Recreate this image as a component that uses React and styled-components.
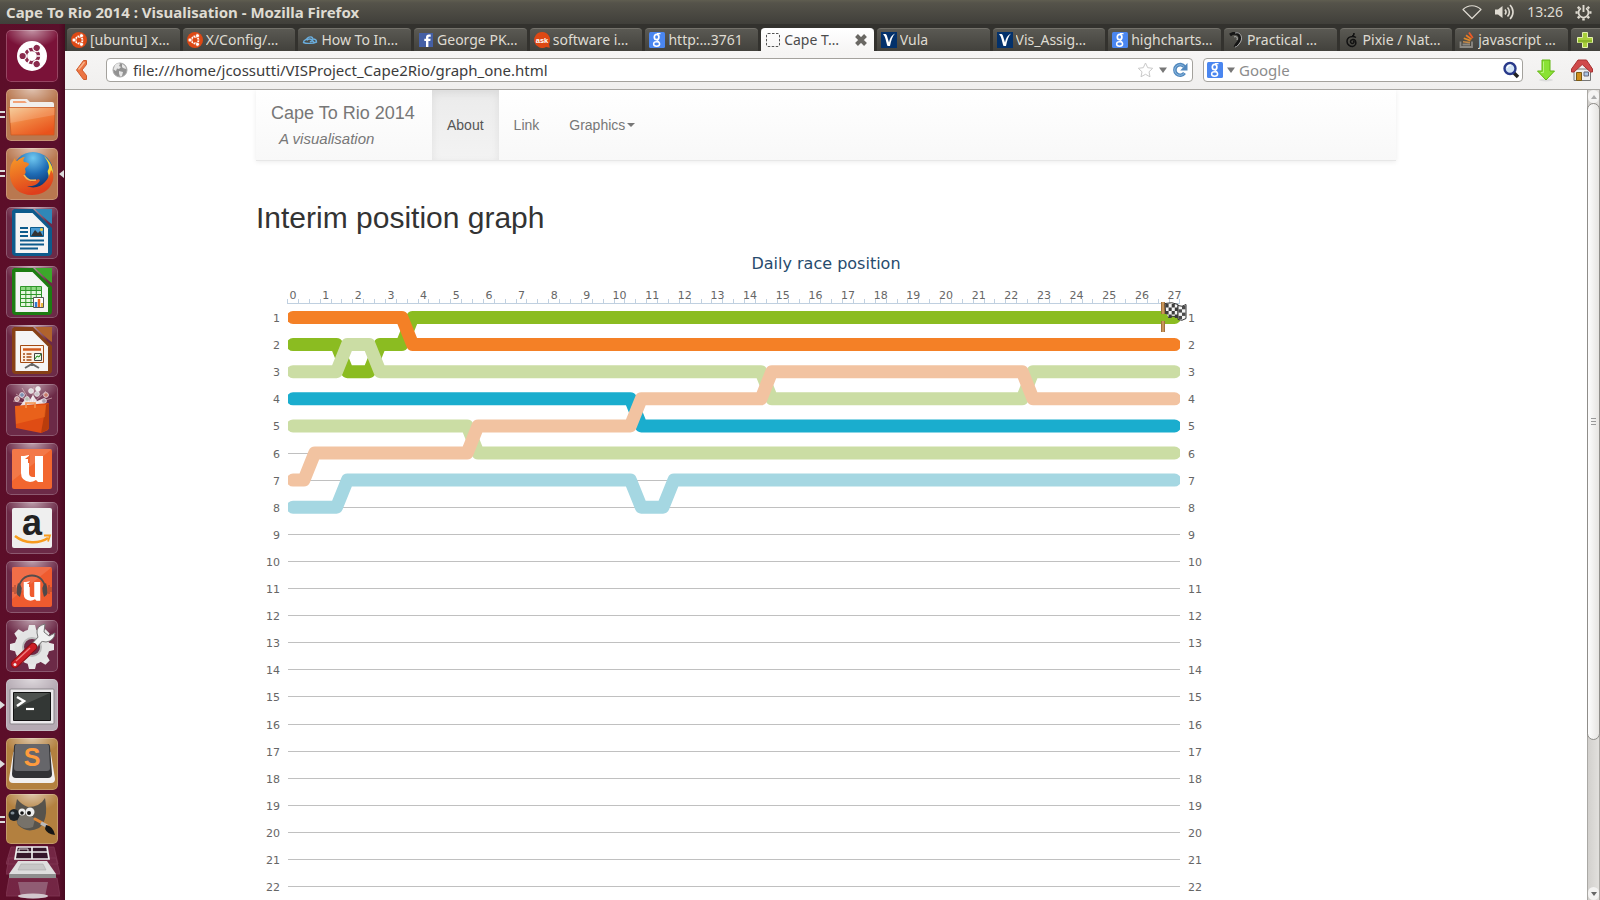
import React from "react";
import styled, { createGlobalStyle, css } from "styled-components";

const Global = createGlobalStyle`
  * { box-sizing: border-box; }
  body { margin: 0; background: #fff; overflow: hidden; }
  button, input { font: inherit; color: inherit; margin: 0; padding: 0; border: 0; background: none; }
  svg { display: block; flex: none; }
`;

const uiFont = `"Noto Sans", "Open Sans", sans-serif`;
const helvetica = `"Liberation Sans", Helvetica, Arial, sans-serif`;

const Desktop = styled.div`
  height: 100vh;
  display: flex;
  flex-direction: column;
  font-family: ${uiFont};
`;

/* ---------- top panel ---------- */
const Panel = styled.header`
  flex: none;
  height: 24px;
  display: flex;
  align-items: center;
  justify-content: space-between;
  padding: 0 8px 0 6px;
  background: linear-gradient(#5f5d50 0, #55534a 3px, #403f3a);
  color: #dfdbd2;
  font-size: 14px;
  line-height: 24px;
`;
const WindowTitle = styled.strong`
  font-weight: 700;
  font-size: 15px;
`;
const Indicators = styled.div`
  display: flex;
  align-items: center;
  gap: 12px;
`;
const ToolbarButtons = styled.div`
  display: flex;
  align-items: center;
  gap: 14px;
`;

const Workspace = styled.div`
  flex: 1;
  min-height: 0;
  display: flex;
`;

/* ---------- launcher ---------- */
const LauncherBar = styled.nav`
  flex: none;
  width: 65px;
  padding: 6px 7px 0 6px;
  display: flex;
  flex-direction: column;
  gap: 7px;
  overflow: hidden;
  background: linear-gradient(90deg, #5c0e29, #5a0f2b 90%, #480a20);
`;
const tones = {
  dash: "#7a1238",
  warm: "#b97850",
  plain: "#6c2a47",
  grey: "#b5aab3",
  gold: "#b3803f",
};
const Tile = styled.button`
  position: relative;
  flex: none;
  width: 52px;
  height: ${(p) => (p.$folding ? "50px" : "52px")};
  margin-top: ${(p) => (p.$folding ? "-3px" : "0")};
  display: grid;
  place-items: center;
  border-radius: 5px;
  background: radial-gradient(ellipse 28px 18px at 50% 0, rgba(255, 255, 255, 0.55), transparent), ${(p) => tones[p.$tone]};
  box-shadow: inset 0 0 0 1px rgba(255, 255, 255, 0.22);
`;
const Mark = styled.span`
  position: absolute;
  top: 22px;
  left: -6px;
  width: 5px;
  height: 7px;
  ${(p) =>
    p.$kind === "two"
      ? css`
          border-top: 2px solid #ddd;
          border-bottom: 2px solid #ddd;
        `
      : css`
          border: 4px solid transparent;
          border-left: 5px solid #ddd;
          border-right: 0;
          height: 8px;
        `}
`;
const Focus = styled.span`
  position: absolute;
  top: 22px;
  right: -6px;
  border: 4px solid transparent;
  border-right: 5px solid #ddd;
  border-left: 0;
`;
const Folded = styled.div`
  flex: none;
  width: 52px;
  margin-top: -5px;
`;

/* ---------- browser ---------- */
const Browser = styled.main`
  flex: 1;
  min-width: 0;
  display: flex;
  flex-direction: column;
`;
const TabStrip = styled.div`
  flex: none;
  height: 27px;
  display: flex;
  align-items: flex-end;
  gap: 3px;
  padding: 0 0 0 2px;
  background: #33322e;
`;
const Tab = styled.button`
  flex: 1 1 0;
  min-width: 0;
  height: 23px;
  display: flex;
  align-items: center;
  gap: 3px;
  padding: 0 5px 0 4px;
  border-radius: 4px 4px 0 0;
  border-top: 1px solid ${(p) => (p.$active ? "#fff" : "#74726b")};
  background: ${(p) => (p.$active ? "linear-gradient(#fff, #f6f5f4)" : "linear-gradient(#5a5953, #42413c)")};
  color: ${(p) => (p.$active ? "#4c4c4c" : "#dfdbd2")};
  font-size: 14px;
  line-height: 22px;
`;
const TabLabel = styled.span`
  flex: 1;
  min-width: 0;
  overflow: hidden;
  white-space: nowrap;
  text-align: left;
`;
const NewTab = styled.button`
  flex: none;
  width: 29px;
  height: 23px;
  display: grid;
  place-items: center;
  border-radius: 4px 0 0 0;
  border-top: 1px solid #74726b;
  background: linear-gradient(#5a5953, #42413c);
`;
const Toolbar = styled.div`
  flex: none;
  height: 39px;
  display: flex;
  align-items: center;
  padding: 0 6px 0 9px;
  border-bottom: 1px solid #a8a6a2;
  background: linear-gradient(#f6f5f4, #f0efee);
  color: #3c3c3c;
  font-size: 15px;
`;
const IconButton = styled.button`
  flex: none;
  display: grid;
  place-items: center;
`;
const Field = styled.label`
  flex: ${(p) => (p.$fixed ? "none" : "1")};
  width: ${(p) => (p.$fixed ? "320px" : "auto")};
  margin: ${(p) => (p.$fixed ? "0 13px 0 10px" : "0 0 0 17px")};
  height: 24px;
  min-width: 0;
  display: flex;
  align-items: center;
  gap: ${(p) => (p.$fixed ? "4px" : "5px")};
  padding: 0 ${(p) => (p.$fixed ? "2px 0 3px" : "4px 0 5px")};
  border: 1px solid #a4a29d;
  border-radius: 4px;
  background: #fff;
`;
const TextInput = styled.input`
  flex: 1;
  min-width: 0;
  height: 22px;
  outline: 0;
  &::placeholder { color: #8c8c8c; opacity: 1; }
`;

const Viewport = styled.div`
  flex: 1;
  min-height: 0;
  display: flex;
`;
const Page = styled.div`
  flex: 1;
  min-width: 0;
  overflow: hidden;
  background: #fff;
  color: #333;
  font-family: ${helvetica};
`;
const Container = styled.div`
  max-width: 1170px;
  margin: 0 auto;
  padding: 0 15px;
`;
const Navbar = styled.nav`
  display: flex;
  height: 71px;
  border-bottom: 1px solid #e7e7e7;
  background: linear-gradient(#fff, #f8f8f8);
  box-shadow: 0 1px 5px rgba(0, 0, 0, 0.08);
`;
const Brand = styled.a`
  min-width: 176px;
  padding: 12px 15px 0;
  color: #777;
  text-decoration: none;
  font-size: 18px;
  line-height: 22px;
`;
const Tagline = styled.em`
  display: block;
  padding: 5px 0 0 8px;
  font-size: 15px;
  line-height: 20px;
`;
const NavLink = styled.a`
  display: flex;
  align-items: center;
  gap: 2px;
  padding: 0 15px;
  font-size: 14px;
  text-decoration: none;
  color: ${(p) => (p.$active ? "#555" : "#777")};
  background: ${(p) => (p.$active ? "linear-gradient(#ebebeb, #f3f3f3)" : "none")};
  box-shadow: ${(p) => (p.$active ? "inset 0 3px 9px rgba(0, 0, 0, 0.075)" : "none")};
`;
const Caret = styled.span`
  border: 4px solid transparent;
  border-top-color: currentColor;
  border-bottom: 0;
`;
const Heading = styled.h2`
  margin: 40px 0 10px;
  font-size: 30px;
  line-height: 33px;
  font-weight: 400;
`;
const ChartSvg = styled.svg`
  width: 100%;
  height: auto;
  font-family: "DejaVu Sans", Verdana, sans-serif;
  font-size: 11px;
  fill: #666;
`;

const ScrollTrack = styled.div`
  flex: none;
  width: 13px;
  display: flex;
  flex-direction: column;
  border: 1px solid #aaa8a4;
  border-width: 0 1px;
  background: linear-gradient(90deg, #d2d0cd, #e2e0dd);
`;
const ScrollButton = styled.button`
  flex: none;
  height: 13px;
  display: grid;
  place-items: center;
  background: #f4f3f2;
  border-radius: 6px;
`;
const ScrollThumb = styled.div`
  flex: 13;
  display: grid;
  place-items: center;
  margin: 0 -1px;
  border: 1px solid #8f8d89;
  border-radius: 7px;
  background: linear-gradient(90deg, #fdfdfd, #e6e4e1);
`;
const ScrollRest = styled.div`
  flex: 3;
`;

/* ---------- small icons ---------- */
const UbuntuMark = ({ size = 16, bg = "#dd4814", fg = "#fff" }) => (
  <svg width={size} height={size} viewBox="0 0 32 32">
    <circle cx="16" cy="16" r="16" fill={bg} />
    <circle cx="16" cy="16" r="7" fill="none" stroke={fg} strokeWidth="3.6" />
    {[60, 180, 300].map((a) => (
      <g key={a} transform={`rotate(${a} 16 16)`}>
        <circle cx="26" cy="16" r="4" fill={fg} stroke={bg} strokeWidth="1.4" />
      </g>
    ))}
    {[0, 120, 240].map((a) => (
      <path key={a} d="M21 16h5" stroke={bg} strokeWidth="1.6" transform={`rotate(${a} 16 16)`} />
    ))}
  </svg>
);
const letterStyle = { fontFamily: helvetica, fontWeight: 700 };
const CloudIcon = () => (
  <svg width="16" height="16" viewBox="0 0 16 16" fill="none" stroke="#6aaede" strokeWidth="1.4">
    <path d="M1.500 10.500c0-3 3-2 4-4.500 3-2 5-1 5.500 1 2 0 3.500 1 3.500 3-3 1.500-10 2-13 .5zM5 8.500c1-2 4-2 6 .5M8 10c1-1 3-1 4 0" />
  </svg>
);
const FacebookIcon = () => (
  <svg width="16" height="16" viewBox="0 0 16 16">
    <path fill="#4560a5" d="M1 1h14v14H1z" />
    <path fill="#fff" d="M8 15V9H6.300V6.800H8V5.400C8 3.500 9 2.500 10.800 2.500h1.900v2.200h-1.300c-.8 0-1 .4-1 1.100v1h2.200L12.300 9h-1.900v6z" />
  </svg>
);
const AskIcon = () => (
  <svg width="16" height="16" viewBox="0 0 16 16">
    <path fill="#dd4814" d="M8 0a8 8 0 0 1 7 12l.8 3.800L12 15A8 8 0 1 1 8 0z" />
    <text x="8" y="10.500" textAnchor="middle" fontSize="7.500" fill="#fff" style={letterStyle}>ask</text>
  </svg>
);
const GoogleIcon = () => (
  <svg width="16" height="16" viewBox="0 0 16 16">
    <rect width="16" height="16" rx="1.500" fill="#4a86f0" />
    <g fill="none" stroke="#fff">
      <ellipse cx="7.600" cy="5" rx="2.300" ry="2.700" strokeWidth="1.700" />
      <path d="M8 1.700h3.500M8.300 7.500c-1 1 .8 1.200 1.700 2.400" strokeWidth="1.200" />
      <ellipse cx="7.600" cy="12" rx="3" ry="2.200" strokeWidth="1.500" />
    </g>
  </svg>
);
const BlankIcon = () => (
  <svg width="16" height="16" viewBox="0 0 16 16">
    <rect x="1.500" y="1.500" width="13" height="13" rx="1.500" fill="none" stroke="#555" strokeDasharray="2.500 1.500" />
  </svg>
);
const VulaIcon = () => (
  <svg width="16" height="16" viewBox="0 0 16 16">
    <path fill="#03316b" d="M0 0h16v16H0z" />
    <path fill="#fff" d="M2 2.500c2-1 3.500-.5 4 1.500l2 6.500c.8-4 2.500-7.500 6-9C11.500 4 10 9 9 14H6.500C5 10 4.500 4 2 2.500z" />
  </svg>
);
const EarIcon = () => (
  <svg width="16" height="16" viewBox="0 0 16 16" fill="none">
    <path d="M2 3C6 0 12 1 12 6c0 4-3 4-5 9" stroke="#161616" strokeWidth="3" />
    <path d="M7 1c6-2 9 6 4 11-1 1-2 3-4 3M6 5c2-1 4 0 3 3" stroke="#ccc" strokeWidth=".8" />
  </svg>
);
const PixieIcon = () => (
  <svg width="16" height="16" viewBox="0 0 16 16" fill="none" stroke="#111" strokeWidth="1.500">
    <path d="M10 1c0 2-1 3-2 3M12 5.500c-3-2-9-1-9 4 0 3 3 5 5.500 5 3-.5 4-3 3-5.500-1-2.500-5-1.500-5 .5 0 2 2 2.500 3 1.500s.5-2-.5-1.500" />
  </svg>
);
const StackIcon = () => (
  <svg width="16" height="16" viewBox="0 0 16 16" fill="none">
    <path d="M1.500 9.500v5.500h11.500V9.500M3.500 12.500h7.500" stroke="#8b8984" strokeWidth="1.800" />
    <path d="m4 9.800 7 .8" stroke="#c18a4b" strokeWidth="1.600" />
    <path d="m4.800 6.300 6.700 2.300" stroke="#dc8b2c" strokeWidth="1.700" />
    <path d="m7 3.300 5.500 4" stroke="#ee7a20" strokeWidth="1.700" />
    <path d="m10 .5 3.800 5.500" stroke="#ee5a28" strokeWidth="1.800" />
  </svg>
);
const CloseIcon = () => (
  <svg width="16" height="14" viewBox="0 0 16 14">
    <path d="m3.500 2.500 9 9m0-9-9 9" stroke="#6a6864" strokeWidth="4" />
  </svg>
);
const PlusIcon = () => (
  <svg width="16" height="16" viewBox="0 0 16 16">
    <path d="M5.500.5h5v5h5v5h-5v5h-5v-5h-5v-5h5z" fill="#a9cf3c" stroke="#e4f1ad" />
    <path d="M1 8h14v2.500H1z" fill="#8ab529" />
  </svg>
);
const WifiIcon = () => (
  <svg width="20" height="16" viewBox="0 0 20 16">
    <path d="M1 5.500C6 .500 14 .500 19 5.500L10 14.500z" fill="#4b4a44" stroke="#dfdbd2" strokeWidth="1.200" strokeLinejoin="round" />
  </svg>
);
const VolumeIcon = () => (
  <svg width="21" height="16" viewBox="0 0 21 16" fill="none" stroke="#dfdbd2" strokeWidth="1.600">
    <path d="M1 5.500h3L8.500 2v12L4 10.500H1z" fill="#dfdbd2" stroke="none" />
    <path d="M11 5.500c1.300 1.500 1.300 3.500 0 5M13.500 3.500c2.500 2.500 2.500 6.500 0 9M16 1c4 4 4 10 0 14" />
  </svg>
);
const GearIcon = () => (
  <svg width="17" height="17" viewBox="0 0 17 17" fill="none" stroke="#dfdbd2">
    <path d="M6 4.200a5 5 0 1 0 5 0" strokeWidth="1.800" />
    <path d="M8.500 1v7" strokeWidth="1.900" />
    {[45, 90, 135, 180, 225, 270, 315].map((a) => (
      <path key={a} d="M8.500 .5v2.200" strokeWidth="2.500" transform={`rotate(${a} 8.500 8.500)`} />
    ))}
  </svg>
);
const BackIcon = () => (
  <svg width="15" height="22" viewBox="0 0 15 22">
    <path d="M9.500 1.500h3v4L8 11l4.500 5.500v4h-3L2.500 11z" fill="#ec7442" stroke="#cf5a2b" strokeLinejoin="round" />
    <path d="m10.500 3-6 7.500" stroke="#f7b48d" strokeWidth="1.500" />
  </svg>
);
const GlobeIcon = () => (
  <svg width="16" height="16" viewBox="0 0 16 16">
    <circle cx="8" cy="8" r="7" fill="#929292" stroke="#aaa" />
    <path fill="#e6e6e6" d="M3 3c2-2 5-2 5-1l-1 2 2 1-2 2-2-.5L4 9 1.500 7.500zM10 2c3 1 4 3 4 5l-3-1-1-1zM7 9l4 1-1 4-2 .5-1-3z" />
  </svg>
);
const StarIcon = () => (
  <svg width="17" height="16" viewBox="0 0 17 16">
    <path d="m8.500 1 2.200 4.700 5 .6-3.700 3.500 1 5-4.500-2.500L4 14.800l1-5L1.300 6.300l5-.6z" fill="#fff" stroke="#c9c9c9" />
  </svg>
);
const DownIcon = () => (
  <svg width="8" height="6" viewBox="0 0 8 6">
    <path d="M0 .5h8L4 6z" fill="#777" />
  </svg>
);
const ReloadIcon = () => (
  <svg width="16" height="16" viewBox="0 0 16 16">
    <path d="M12.500 11a5.300 5.300 0 1 1 0-6.200" fill="none" stroke="#5288bd" strokeWidth="3.600" />
    <path d="M15.500 1v7.500H8.200z" fill="#5288bd" />
    <path d="M12 11.500a5.300 5.300 0 1 1 0-7" fill="none" stroke="#8dbbe2" strokeWidth="1" />
  </svg>
);
const SearchIcon = () => (
  <svg width="18" height="18" viewBox="0 0 18 18">
    <path d="m11.500 11.500 4.500 4.500" stroke="#222" strokeWidth="3.500" />
    <circle cx="8" cy="7.500" r="5.500" fill="#d3e4f5" stroke="#28398a" strokeWidth="2.400" />
    <path d="M5 7c.5-2 2-3 4-3" fill="none" stroke="#fff" strokeWidth="1.200" />
  </svg>
);
const DownloadIcon = () => (
  <svg width="20" height="23" viewBox="0 0 20 23">
    <ellipse cx="10" cy="21" rx="7" ry="1.500" fill="#ddd" />
    <path d="M6 1h8v11h4.500L10 21 1.500 12H6z" fill="#8ae234" stroke="#62b512" strokeLinejoin="round" />
    <path d="M7.500 2.500v11H5" fill="none" stroke="#b8f57c" />
  </svg>
);
const HomeIcon = () => (
  <svg width="24" height="24" viewBox="0 0 24 24">
    <path d="M4 11h16.500v11.500H4z" fill="#eeeeec" stroke="#777" />
    <path d="M8 2h8.500L22.500 11v3h-2L12.200 6.500 4 14H1.500v-3z" fill="#d04a4a" stroke="#a83232" strokeLinejoin="round" />
    <path d="M6.500 14.500h5v8h-5z" fill="#cf8e1b" stroke="#7b5a12" />
    <path d="M14 14h4.500v4H14z" fill="#a9c5e4" stroke="#667" />
  </svg>
);

/* ---------- launcher icons (48 x 48 artwork) ---------- */
const Art = ({ children }) => (
  <svg width="48" height="48" viewBox="0 0 48 48">{children}</svg>
);
const FolderArt = () => (
  <Art>
    <defs>
      <linearGradient id="fold" x2=".7" y2="1"><stop stopColor="#f5c68d" /><stop offset=".5" stopColor="#f0823f" /><stop offset="1" stopColor="#e9531c" /></linearGradient>
    </defs>
    <path d="M2 18V10q0-2 2-2h15l3 3h22q2 0 2 2v5z" fill="#f1efed" />
    <path d="M5 10h12l2 2H5z" fill="#f2a277" />
    <path d="M1 16.500h46L46 44H3z" fill="url(#fold)" stroke="#cc5a22" strokeWidth=".8" />
    <path d="M1.500 17h45v7L2 32z" fill="#fff" opacity=".15" />
  </Art>
);
const FirefoxArt = () => (
  <Art>
    <defs>
      <radialGradient id="fxb" cx=".5" cy=".15" r=".8"><stop stopColor="#6fc8f0" /><stop offset=".5" stopColor="#1f6cb5" /><stop offset="1" stopColor="#0b2a63" /></radialGradient>
      <linearGradient id="fxo" x2=".4" y2="1"><stop stopColor="#f79a28" /><stop offset="1" stopColor="#df3f1c" /></linearGradient>
    </defs>
    <circle cx="25" cy="22" r="20" fill="url(#fxb)" />
    <path d="M36 6c6 5 9 11 9 17 0 8-4 16-12 19 7-7 9-13 7-19-1-3 1-3 1-6 0-4-3-8-5-11z" fill="#fbd633" />
    <path d="M3 15c1-3 3-5 4-7 0 2 1 3 2 3 2-2 5-4 8-4-2 2-2 4-1 5 2 0 5 1 5 2 0 2-4 3-4 5 1 3 1 4-1 6 2 5 7 8 12 5 3-2 5 0 3 2-3 4-9 5-12 4 6 3 14 1 18-4 3-3 5-8 6-12 3 3 3 9 1 13-3 8-11 12-20 12C11 45 3 37 2 26c0-5 0-8 1-11z" fill="url(#fxo)" />
    <path d="M16 25c3 5 6 6 12 5" fill="none" stroke="#f9b453" strokeWidth="1.500" />
  </Art>
);
const docs = { writer: ["#0d5b8c", "#2f88b8"], calc: ["#1d7d12", "#3ca82b"], impress: ["#874016", "#b0632d"] };
const DocArt = ({ kind, children }) => (
  <Art>
    <path d="M6 0h19l19 19v24q0 4-4 4H8q-4 0-4-4V2z" fill={docs[kind][0]} />
    <path d="M27 0h17v15q-2-1-3-2L30 3z" fill={docs[kind][1]} />
    <path d="M7.500 4h17L40 19.500V44H7.500z" fill="#f5f5f5" />
    {children}
  </Art>
);
const WriterArt = () => (
  <DocArt kind="writer">
    <path d="M12 19h8M12 23h8M12 27h8M12 31.500h24M12 35.500h24M12 39.500h18" stroke="#0d5b8c" strokeWidth="2" />
    <path d="M22.500 18.500h13v9h-13z" fill="#4b9cd3" stroke="#0d5b8c" />
    <path d="m23 27 4-6 3 3 2-2 3 5z" fill="#333" /><circle cx="33.500" cy="20.500" r="1.500" fill="#f2cb3d" />
  </DocArt>
);
const CalcArt = () => (
  <DocArt kind="calc">
    <path d="M12.500 18.500h21v20h-21z" fill="#e5f7df" stroke="#2f962a" />
    <path d="M13 19h20v4H13z" fill="#8fd984" />
    <path d="M12 22.500h22M12 26.500h22M12 30.500h22M12 34.500h22M17.800 18v21M23 18v21M28.300 18v21" stroke="#2f962a" />
    <path d="M25.500 29.500h10v10h-10z" fill="#fff" stroke="#555" />
    <path d="M28 39v-5" stroke="#2f7bd0" strokeWidth="2.500" /><path d="M31 39v-8" stroke="#e8681c" strokeWidth="2.500" /><path d="M34 39v-4" stroke="#e7b93e" strokeWidth="2" />
  </DocArt>
);
const ImpressArt = () => (
  <DocArt kind="impress">
    <path d="M24 36v3m-7 2 7-4 7 4" stroke="#666" strokeWidth="2" fill="none" />
    <path d="M12.500 18.500h23v17h-23z" fill="#fdf1e6" stroke="#a34b13" />
    <path d="M15 22.500h18" stroke="#d15a1c" strokeWidth="2.500" />
    <path d="M15 27h2M15 30h2M15 33h2M18.500 27h5M18.500 30h5M18.500 33h5" stroke="#a34b13" strokeWidth="1.600" />
    <path d="M26.500 26.500h7v7h-7z" fill="#e7f6e5" stroke="#444" /><path d="m27 32 2-3 2 1 2-3" stroke="#1d8a12" fill="none" />
  </DocArt>
);
const BagArt = () => (
  <Art>
    <path d="m24 18-16-10m16 10L14 2m10 16L26 1m-2 17L38 5m-14 13L44 12M24 18 5 15" stroke="#e8c9c9" opacity=".6" />
    <path d="m12 20 6-8 3 3 4-6 4 6 5-2 4 7z" fill="#fff" opacity=".85" />
    {[[14, 9, "#7d8fb0"], [23, 5, "#ddd"], [29, 8, "#c9c5c8"], [38, 9, "#c77b6b"], [36, 15, "#a9a0b0"], [19, 13, "#b9c4b8"], [9, 13, "#c99"], [30, 3, "#eee"]].map(([x, y, c]) => (
      <circle key={`${x}-${y}`} cx={x} cy={y} r="2.400" fill={c} stroke="#f2e9ee" strokeWidth=".8" />
    ))}
    <path d="M7 20 41 17l-1 27-7 3L8 42z" fill="#df4c14" /><path d="m41 17-3 2-5 28 8-4z" fill="#b93c0c" />
    <path d="m7 20 31-1-1 12L8 38z" fill="#f0701f" opacity=".6" />
    <path d="M18 22v-5h9v5" fill="none" stroke="#f4904a" strokeWidth="1.700" />
  </Art>
);
const SquareBase = ({ fill }) => <rect x="4" y="4" width="40" height="40" rx="2" fill={fill} />;
const UShape = () => (
  <path d="M13 11h3l5-1v18q0 4 4 4h2V11h8v26h-5l-2-2q-3 2-6 2-9-1-9-9z" fill="#fff" />
);
const UbuntuOneArt = () => (
  <Art>
    <SquareBase fill="#f2662f" /><path d="M4 4h40L4 36z" fill="#fff" opacity=".12" />
    <UShape /><path d="m17 14 5-4v8h-2v-4z" fill="#f2662f" />
  </Art>
);
const AmazonArt = () => (
  <Art>
    <SquareBase fill="#efefef" />
    <text x="24" y="31" textAnchor="middle" fontSize="36" fill="#222" style={letterStyle}>a</text>
    <path d="M7 32c10 8 24 8 33 2" fill="none" stroke="#f79c1f" strokeWidth="2.500" />
    <path d="M36 31.500h6l-2 6" fill="none" stroke="#f79c1f" strokeWidth="1.800" />
  </Art>
);
const MusicArt = () => (
  <Art>
    <SquareBase fill="#ef5b2f" /><path d="M4 4h40L4 36z" fill="#fff" opacity=".12" />
    <g transform="translate(6 11) scale(.75 .72)"><UShape /><path d="m17 14 5-4v8h-2v-4z" fill="#ef5b2f" /></g>
    <path d="M11 26c0-18 26-18 26 0" fill="none" stroke="#534d4c" strokeWidth="1.800" />
    <path d="M10 20q6 2 2 14-6-2-2-14zM38 20q-6 2-2 14 6-2 2-14z" fill="#4f494a" />
    <path d="M7 22v9M5 24v5M41 22v9M43 24v5" stroke="#934434" />
  </Art>
);
const SettingsArt = () => (
  <Art>
    {[0, 45, 90, 135, 180, 225, 270, 315].map((a) => (
      <path key={a} d="m19 11 2-8h6l2 8z" fill="#e8e8e8" transform={`rotate(${a} 24 25)`} />
    ))}
    <circle cx="24" cy="25" r="13" fill="none" stroke="#e4e4e4" strokeWidth="9" />
    <circle cx="24" cy="25" r="9" fill="none" stroke="#b9b9b9" strokeWidth="2" />
    <path d="M24 26 36 13" stroke="#777" strokeWidth="7" />
    <path d="M37 2q-9 2-8 9 1 9 9 9 8-1 9-9l-6 3-5-4z" fill="#f1f1f1" stroke="#777" strokeLinejoin="round" />
    <path d="M24 26 35 14" stroke="#f1f1f1" strokeWidth="5" />
    <path d="M7 42 25 25" stroke="#8b0e14" strokeWidth="8.500" strokeLinecap="round" /><path d="M7 42 25 25" stroke="#cc1e26" strokeWidth="6.500" strokeLinecap="round" />
    <path d="m8 39 14-13" stroke="#f08080" strokeWidth="1.300" /><circle cx="7" cy="42.500" r="1.500" fill="#eee" />
  </Art>
);
const TerminalArt = () => (
  <Art>
    <rect x="2" y="8" width="44" height="35" rx="1" fill="#eceaec" stroke="#8a858a" />
    <path d="M5.500 11.500h37v28h-37z" fill="#333735" stroke="#111" /><path d="M6 12h36L6 28z" fill="#5a5e5b" opacity=".7" />
    <path d="m9 16 7 4-7 5" fill="none" stroke="#fff" strokeWidth="2.500" /><path d="M18 28h8" stroke="#fff" strokeWidth="2.200" />
  </Art>
);
const SublimeArt = () => (
  <Art>
    <path d="M5 14q0-3 3-3h32q3 0 3 3l4 25q0 4-4 4H5q-4 0-4-4z" fill="#f1efef" />
    <path d="M8 4h32q2 0 2 3l2 27q0 4-4 4H8q-4 0-4-4L6 7q0-3 2-3z" fill="#323235" />
    <path d="M9 4h30q2 0 2 3l1 21q0 3-3 3H9q-3 0-3-3L7 7q0-3 2-3z" fill="#66666a" />
    <text x="24" y="26" textAnchor="middle" fontSize="25" fill="#ff9b3d" style={letterStyle}>S</text>
  </Art>
);
const GimpArt = () => (
  <Art>
    <path d="M9 4q5 6 11 8 12 0 17-9 4 22-6 30-12 6-21-3-5-12-1-26z" fill="#57534c" />
    <path d="M10 22c5-4 12-3 17 2l-2 8q-10 4-16-4z" fill="#77726a" />
    <ellipse cx="6" cy="20" rx="5.500" ry="6" fill="#1c2127" /><ellipse cx="4.500" cy="18" rx="2" ry="1.500" fill="#7e8a94" />
    <circle cx="14" cy="17" r="3.500" fill="#eee" /><circle cx="22" cy="17" r="4.500" fill="#eee" />
    <circle cx="14" cy="18" r="1.800" fill="#111" /><circle cx="21" cy="18" r="2" fill="#111" />
    <path d="m27 24 13 7" stroke="#e08734" strokeWidth="3" strokeLinecap="round" /><path d="m33 28 6 3" stroke="#bbb" strokeWidth="3.500" />
    <path d="M38 30q7 1 9 10-8-1-10-6z" fill="#161616" />
  </Art>
);
const FoldedArt = () => (
  <svg width="54" height="54" viewBox="0 0 54 54">
    <path d="M5 1h43l4 17H0zM3 12h47l4 16H0zM3 32h48l3 18H0z" fill="#8d3d5e" opacity=".5" stroke="#a7607c" strokeWidth=".8" />
    <path d="M11 1h30l2 12H9zM10 6h32M26 1v12" fill="#35162a" stroke="#eee" strokeWidth="1.700" />
    <path d="M13 3h9v3h-9z" fill="none" stroke="#ddd" />
    <path d="M12 15h29l9 13H3z" fill="#dedede" /><path d="M3 28h47v4H3z" fill="#8e8e8e" />
    <path d="M15 18h22l3 6H12z" fill="#c7c7c7" stroke="#aaa" strokeWidth=".6" />
    <path d="M12 36h30l-3 15q-12 3-24 0z" fill="#9d7487" opacity=".7" />
    <ellipse cx="27" cy="50" rx="15" ry="2.500" fill="#d3c8ce" />
  </svg>
);

const launcher = [
  { name: "Dash", tone: "dash", art: <UbuntuMark size={30} bg="#fff" fg="#8a2a4c" /> },
  { name: "Files", tone: "warm", art: <FolderArt />, mark: "two" },
  { name: "Firefox", tone: "warm", art: <FirefoxArt />, mark: "two", focus: true },
  { name: "Writer", tone: "plain", art: <WriterArt /> },
  { name: "Calc", tone: "plain", art: <CalcArt /> },
  { name: "Impress", tone: "plain", art: <ImpressArt /> },
  { name: "Software Centre", tone: "plain", art: <BagArt /> },
  { name: "Ubuntu One", tone: "plain", art: <UbuntuOneArt /> },
  { name: "Amazon", tone: "plain", art: <AmazonArt /> },
  { name: "Ubuntu One Music", tone: "plain", art: <MusicArt /> },
  { name: "System Settings", tone: "plain", art: <SettingsArt /> },
  { name: "Terminal", tone: "grey", art: <TerminalArt />, mark: "one" },
  { name: "Sublime Text", tone: "gold", art: <SublimeArt />, mark: "one" },
  { name: "GIMP", tone: "gold", art: <GimpArt />, mark: "two", folding: true },
];

const tabs = [
  [<UbuntuMark />, "[ubuntu] x…"],
  [<UbuntuMark />, "X/Config/…"],
  [<CloudIcon />, "How To In…"],
  [<FacebookIcon />, "George PK…"],
  [<AskIcon />, "software i…"],
  [<GoogleIcon />, "http:…3761"],
  [<BlankIcon />, "Cape T…", true],
  [<VulaIcon />, "Vula"],
  [<VulaIcon />, "Vis_Assig…"],
  [<GoogleIcon />, "highcharts…"],
  [<EarIcon />, "Practical …"],
  [<PixieIcon />, "Pixie / Nat…"],
  [<StackIcon />, "javascript …"],
];

/* ---------- chart ---------- */
const PLOT = { left: 32, right: 924, axis: 59.5, firstDay: 37, dayStep: 32.65, firstRow: 73.5, rowStep: 27.1 };
const LAST_DAY = 27;
const ROWS = 22;
const dayX = (day) => PLOT.firstDay + day * PLOT.dayStep;
const rowY = (pos) => PLOT.firstRow + (pos - 1) * PLOT.rowStep;

// Each boat: starting position, then [day, new position] for every change of place.
const boats = [
  { color: "#8bbc21", start: 2, moves: [[1, 3], [2, 2], [3, 1]] },
  { color: "#f48026", start: 1, moves: [[3, 2]] },
  { color: "#cbdda4", start: 3, moves: [[1, 2], [2, 3], [14, 4], [22, 3]] },
  { color: "#1aadce", start: 4, moves: [[10, 5]] },
  { color: "#cbdda4", start: 5, moves: [[5, 6]] },
  { color: "#f2c3a1", start: 7, moves: [[0, 6], [5, 5], [10, 4], [14, 3], [22, 4]] },
  { color: "#a5d7e2", start: 8, moves: [[1, 7], [10, 8], [11, 7]] },
];
const boatPath = ({ start, moves }) => {
  let pos = start;
  let d = `M${dayX(0)} ${rowY(pos)}`;
  moves.forEach(([day, next]) => {
    d += `L${dayX(day + 1 / 3)} ${rowY(pos)}L${dayX(day + 2 / 3)} ${rowY(next)}`;
    pos = next;
  });
  return `${d}L${dayX(LAST_DAY)} ${rowY(pos)}`;
};
const range = (n) => Array.from({ length: n }, (_, i) => i);

const Flag = () => (
  <g transform="translate(904 58)">
    <path d="M1 0h4v30H1z" fill="#c9965a" /><path d="M1.500 0v30M4.500 0v30" stroke="#8f6232" strokeWidth=".7" />
    <path d="M5 1.500q7-2 13 1v13q-6-3-12 1z" fill="#f4f4f4" stroke="#333" />
    <path d="M18 3.500q4 2 8-1v14q-4 3-8 1z" fill="#f4f4f4" stroke="#333" />
    {range(4).map((r) =>
      range(4).map((c) =>
        (r + c) % 2 === 0 ? <rect key={`${r}-${c}`} x={5.5 + c * 3.1} y={2 + r * 3.500} width="3.100" height="3.500" fill="#3c3c3c" /> : null
      )
    )}
    {range(4).map((r) =>
      range(2).map((c) =>
        (r + c) % 2 === 1 ? <rect key={`${r}-${c}`} x={18.5 + c * 3.500} y={4 + r * 3.300} width="3.500" height="3.300" fill="#4a4a4a" /> : null
      )
    )}
    <path d="M0 12h6l2 2v5H0z" fill="#8bbc21" />
  </g>
);

const Chart = () => (
  <ChartSvg viewBox="0 0 1140 656" role="img" aria-label="Daily race position">
    <defs>
      <clipPath id="plot"><rect x={PLOT.left} y="60" width={PLOT.right - PLOT.left} height="596" /></clipPath>
    </defs>
    <text x="570" y="25" textAnchor="middle" fontSize="16" fill="#274b6d">Daily race position</text>
    {range(ROWS).map((i) => {
      const y = Math.floor(rowY(i + 1)) + 0.5;
      return (
        <g key={i}>
          <path d={`M${PLOT.left} ${y}H${PLOT.right}`} stroke="#c0c0c0" />
          <text x="24" y={y + 4} textAnchor="end">{i + 1}</text>
          <text x="932" y={y + 4}>{i + 1}</text>
        </g>
      );
    })}
    <path d={`M${PLOT.left - 1} ${PLOT.axis}H${PLOT.right}`} stroke="#c0d0e0" />
    {range(83).map((i) => (
      <path key={i} d={`M${Math.floor(31.5 + i * 10.884) + 0.5} 55v4`} stroke="#c0d0e0" />
    ))}
    {range(LAST_DAY + 1).map((d) => (
      <text key={d} x={dayX(d)} y="55" textAnchor="middle">{d}</text>
    ))}
    <g clipPath="url(#plot)" fill="none" strokeWidth="13" strokeLinejoin="round" strokeLinecap="round">
      {boats.map((b, i) => <path key={i} d={boatPath(b)} stroke={b.color} />)}
    </g>
    <Flag />
  </ChartSvg>
);

export default function App() {
  return (
    <Desktop>
      <Global />
      <Panel>
        <WindowTitle>Cape To Rio 2014 : Visualisation - Mozilla Firefox</WindowTitle>
        <Indicators>
          <WifiIcon />
          <VolumeIcon />
          <span>13:26</span>
          <GearIcon />
        </Indicators>
      </Panel>
      <Workspace>
        <LauncherBar aria-label="Launcher">
          {launcher.map((app) => (
            <Tile key={app.name} $tone={app.tone} $folding={app.folding} aria-label={app.name}>
              {app.mark && <Mark $kind={app.mark} />}
              {app.art}
              {app.focus && <Focus />}
            </Tile>
          ))}
          <Folded><FoldedArt /></Folded>
        </LauncherBar>
        <Browser>
          <TabStrip role="tablist">
            {tabs.map(([icon, label, active]) => (
              <Tab key={label} role="tab" aria-selected={!!active} $active={active}>
                {icon}
                <TabLabel>{label}</TabLabel>
                {active && <CloseIcon />}
              </Tab>
            ))}
            <NewTab aria-label="New tab"><PlusIcon /></NewTab>
          </TabStrip>
          <Toolbar>
            <IconButton aria-label="Back"><BackIcon /></IconButton>
            <Field>
              <GlobeIcon />
              <TextInput aria-label="Address" defaultValue="file:///home/jcossutti/VISProject_Cape2Rio/graph_one.html" />
              <StarIcon />
              <DownIcon />
              <ReloadIcon />
            </Field>
            <Field $fixed>
              <GoogleIcon />
              <DownIcon />
              <TextInput aria-label="Search" placeholder="Google" />
              <SearchIcon />
            </Field>
            <ToolbarButtons>
              <IconButton aria-label="Downloads"><DownloadIcon /></IconButton>
              <IconButton aria-label="Home"><HomeIcon /></IconButton>
            </ToolbarButtons>
          </Toolbar>
          <Viewport>
            <Page>
              <Container>
                <Navbar>
                  <Brand href="#home">
                    Cape To Rio 2014
                    <Tagline>A visualisation</Tagline>
                  </Brand>
                  <NavLink href="#about" $active>About</NavLink>
                  <NavLink href="#link">Link</NavLink>
                  <NavLink href="#graphics">Graphics<Caret /></NavLink>
                </Navbar>
                <Heading>Interim position graph</Heading>
                <Chart />
              </Container>
            </Page>
            <ScrollTrack>
              <ScrollButton aria-label="Scroll up">
                <svg width="6" height="4" viewBox="0 0 6 4"><path d="M0 4h6L3 0z" fill="#aaa" /></svg>
              </ScrollButton>
              <ScrollThumb>
                <svg width="5" height="8" viewBox="0 0 5 8"><path d="M0 .5h5M0 3.500h5M0 6.500h5" stroke="#999" /></svg>
              </ScrollThumb>
              <ScrollRest />
              <ScrollButton aria-label="Scroll down">
                <svg width="6" height="4" viewBox="0 0 6 4"><path d="M0 0h6L3 4z" fill="#666" /></svg>
              </ScrollButton>
            </ScrollTrack>
          </Viewport>
        </Browser>
      </Workspace>
    </Desktop>
  );
}
